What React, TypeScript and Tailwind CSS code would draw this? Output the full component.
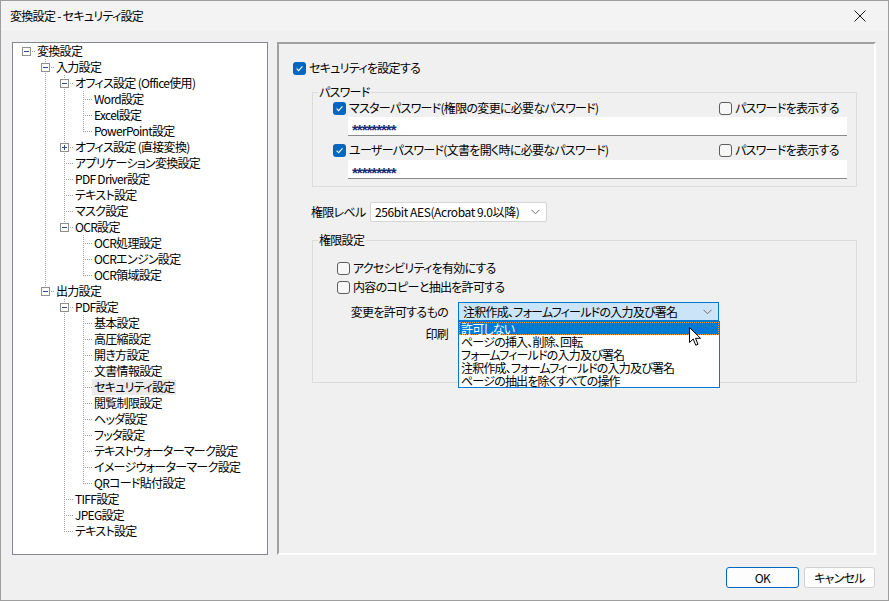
import React from 'react';

type TreeNode = { label: string; children?: TreeNode[]; collapsed?: boolean; selected?: boolean };

const leaf = (label: string, selected = false): TreeNode => ({ label, selected });

const TREE: TreeNode = {
  label: '変換設定',
  children: [
    {
      label: '入力設定',
      children: [
        { label: 'オフィス設定 (Office使用)', children: [leaf('Word設定'), leaf('Excel設定'), leaf('PowerPoint設定')] },
        { label: 'オフィス設定 (直接変換)', collapsed: true, children: [leaf('-')] },
        leaf('アプリケーション変換設定'),
        leaf('PDF Driver設定'),
        leaf('テキスト設定'),
        leaf('マスク設定'),
        { label: 'OCR設定', children: [leaf('OCR処理設定'), leaf('OCRエンジン設定'), leaf('OCR領域設定')] },
      ],
    },
    {
      label: '出力設定',
      children: [
        {
          label: 'PDF設定',
          children: [
            leaf('基本設定'),
            leaf('高圧縮設定'),
            leaf('開き方設定'),
            leaf('文書情報設定'),
            leaf('セキュリティ設定', true),
            leaf('閲覧制限設定'),
            leaf('ヘッダ設定'),
            leaf('フッタ設定'),
            leaf('テキストウォーターマーク設定'),
            leaf('イメージウォーターマーク設定'),
            leaf('QRコード貼付設定'),
          ],
        },
        leaf('TIFF設定'),
        leaf('JPEG設定'),
        leaf('テキスト設定'),
      ],
    },
  ],
};

type Row = { node: TreeNode; level: number; last: boolean; guides: boolean[] };

function flatten(node: TreeNode, level: number, last: boolean, guides: boolean[], out: Row[]) {
  out.push({ node, level, last, guides });
  if (node.children && !node.collapsed) {
    const kids = node.children;
    kids.forEach((c, i) => flatten(c, level + 1, i === kids.length - 1, [...guides, !last], out));
  }
}

const ROWS: Row[] = [];
flatten(TREE, 0, true, [], ROWS);

const cx = (l: number) => 13 + 19 * l;
const DOT = { stroke: '#a0a0a0', strokeDasharray: '1 1', shapeRendering: 'crispEdges' as const };

const TreeRow = ({ row }: { row: Row }) => {
  const { node, level: L, last, guides } = row;
  const c = cx(L);
  const hasBox = !!node.children;
  return (
    <div className="flex h-[16px] items-center">
      <svg width={c + 10} height={16} className="shrink-0">
        {guides.map((g, a) =>
          a >= 1 && a < L && g ? <line key={a} x1={cx(a) + 0.5} y1={0} x2={cx(a) + 0.5} y2={16} {...DOT} /> : null
        )}
        {L >= 1 && <line x1={c + 0.5} y1={0} x2={c + 0.5} y2={last ? 9 : 16} {...DOT} />}
        <line x1={c} y1={8.5} x2={c + 10} y2={8.5} {...DOT} />
        {hasBox && (
          <g shapeRendering="crispEdges">
            <rect x={c - 3.5} y={4.5} width={8} height={8} fill="#fff" stroke="#8e8f8f" />
            <line x1={c - 2} y1={8.5} x2={c + 3} y2={8.5} stroke="#2c4a86" />
            {node.collapsed && <line x1={c + 0.5} y1={6} x2={c + 0.5} y2={11} stroke="#2c4a86" />}
          </g>
        )}
      </svg>
      {node.selected ? (
        <span className="flex h-[16px] items-center whitespace-nowrap bg-[#ebebeb] px-[2px] -ml-[1px]">{node.label}</span>
      ) : (
        <span className="ml-[1px] whitespace-nowrap">{node.label}</span>
      )}
    </div>
  );
};

const Check = ({ checked }: { checked?: boolean }) =>
  checked ? (
    <span className="flex h-[13px] w-[13px] shrink-0 items-center justify-center rounded-[3px] bg-[#0067c0]">
      <svg width="9" height="9" viewBox="0 0 9 9">
        <path d="M1.6 4.7 L3.6 6.6 L7.5 2.4" stroke="#fff" strokeWidth="1.1" fill="none" />
      </svg>
    </span>
  ) : (
    <span className="h-[13px] w-[13px] shrink-0 rounded-[3px] border border-[#5d5d5d] bg-[#f7f7f7]" />
  );

const CheckLabel = ({ checked, children }: { checked?: boolean; children: React.ReactNode }) => (
  <div className="flex h-[16px] items-center gap-[3px] whitespace-nowrap">
    <Check checked={checked} />
    <span>{children}</span>
  </div>
);

const Chevron = () => (
  <svg width="9" height="6" viewBox="0 0 9 6" className="shrink-0">
    <path d="M0.5 0.8 L4.5 4.8 L8.5 0.8" stroke="#6b6b6b" strokeWidth="1" fill="none" />
  </svg>
);

const PasswordField = () => (
  <div className="ml-[15px] flex h-[19px] w-[499px] items-center border-b border-[#8a8a8a] bg-white pl-[4px] pt-[8px] font-['Liberation_Sans',sans-serif] text-[15px] font-bold tracking-[-1px] text-[#1b2b74]">
    *********
  </div>
);

const OPTIONS = [
  '許可しない',
  'ページの挿入、削除、回転',
  'フォームフィールドの入力及び署名',
  '注釈作成、フォームフィールドの入力及び署名',
  'ページの抽出を除くすべての操作',
];

export default function App() {
  return (
    <div className="relative flex h-[601px] w-[889px] flex-col overflow-hidden border border-[#9e9e9e] bg-[#f0f0f0] text-[12px] leading-[16px] tracking-[-0.7px] text-black font-['Noto_Sans_CJK_JP',sans-serif] [font-feature-settings:'palt']">
      {/* title bar */}
      <div className="flex h-[30px] shrink-0 items-center justify-between bg-[#f3f3f3] pl-[9px] pr-[22px]">
        <span>変換設定 - セキュリティ設定</span>
        <svg width="12" height="12" viewBox="0 0 12 12">
          <path d="M0.5 0.5 L11.5 11.5 M11.5 0.5 L0.5 11.5" stroke="#1a1a1a" strokeWidth="1" />
        </svg>
      </div>

      <div className="flex pl-[11px] pt-[11px]">
        {/* tree */}
        <div className="h-[513px] w-[256px] shrink-0 overflow-hidden border border-[#828790] bg-white">
          {ROWS.map((r, i) => (
            <TreeRow key={i} row={r} />
          ))}
        </div>

        {/* right panel */}
        <div className="ml-[9px] h-[513px] w-[599px] shrink-0 border-2 border-t-[#a0a0a0] border-l-[#a0a0a0] border-r-white border-b-white pl-[14px] pt-[16px]">
          <CheckLabel checked>セキュリティを設定する</CheckLabel>

          <fieldset className="ml-[19px] mt-[8px] w-[545px] border border-[#dcdcdc] p-0">
            <legend className="ml-[5px] px-[1px] leading-[16px]">パスワード</legend>
            <div className="pb-[7px] pl-[20px]">
              <div className="flex">
                <div className="w-[386px]">
                  <CheckLabel checked>マスターパスワード(権限の変更に必要なパスワード)</CheckLabel>
                </div>
                <CheckLabel>パスワードを表示する</CheckLabel>
              </div>
              <div className="mt-[1px]">
                <PasswordField />
              </div>
              <div className="mt-[6px] flex">
                <div className="w-[386px]">
                  <CheckLabel checked>ユーザーパスワード(文書を開く時に必要なパスワード)</CheckLabel>
                </div>
                <CheckLabel>パスワードを表示する</CheckLabel>
              </div>
              <div className="mt-[2px]">
                <PasswordField />
              </div>
            </div>
          </fieldset>

          <div className="ml-[18px] mt-[15px] flex h-[20px] items-center">
            <span className="w-[59px]">権限レベル</span>
            <div className="flex h-[20px] w-[177px] items-center justify-between rounded-[2px] border border-[#d5d5d5] bg-white pl-[4px] pr-[6px]">
              <span className="tracking-[-0.4px]">256bit AES(Acrobat 9.0以降)</span>
              <Chevron />
            </div>
          </div>

          <fieldset className="ml-[19px] mt-[10px] w-[545px] border border-[#dcdcdc] p-0">
            <legend className="ml-[5px] px-[1px] leading-[16px]">権限設定</legend>
            <div className="pb-[39px] pl-[24px] pt-[12px]">
              <CheckLabel>アクセシビリティを有効にする</CheckLabel>
              <div className="mt-[3px]">
                <CheckLabel>内容のコピーと抽出を許可する</CheckLabel>
              </div>
              <div className="mt-[7px] flex h-[19px] items-center">
                <span className="w-[111px] text-right">変更を許可するもの</span>
                <div className="relative ml-[10px] w-[261px]">
                  <div className="flex h-[19px] items-center justify-between border border-[#0078d4] bg-[#cce4f7] pl-[4px] pr-[6px]">
                    <span className="whitespace-nowrap tracking-[-0.75px]">注釈作成、フォームフィールドの入力及び署名</span>
                    <Chevron />
                  </div>
                  {/* open drop-down list */}
                  <div className="absolute left-0 top-full z-10 w-[262px] overflow-hidden border border-[#0078d4] bg-white tracking-[-0.8px]">
                    {OPTIONS.map((o, i) => (
                      <div
                        key={o}
                        className={
                          i === 0
                            ? 'flex h-[13px] items-center whitespace-nowrap border border-dotted border-[#f0a030] bg-[#0078d7] pl-[1px] leading-[13px] text-white'
                            : 'flex h-[13px] items-center whitespace-nowrap pl-[2px] leading-[13px]'
                        }
                      >
                        {o}
                      </div>
                    ))}
                  </div>
                </div>
              </div>
              <div className="mt-[3px] flex h-[19px] items-center">
                <span className="w-[111px] text-right">印刷</span>
                <div className="ml-[10px] h-[19px] w-[261px] border border-[#d5d5d5] bg-white" />
              </div>
            </div>
          </fieldset>
        </div>
      </div>

      {/* buttons */}
      <div className="flex justify-end gap-[5px] pr-[13px] pt-[12px]">
        <button className="flex h-[21px] w-[73px] items-center justify-center rounded-[3px] border border-[#0067c0] bg-[#fdfdfd]">
          OK
        </button>
        <button className="flex h-[21px] w-[71px] items-center justify-center rounded-[3px] border border-[#d0d0d0] bg-[#fdfdfd]">
          キャンセル
        </button>
      </div>

      {/* mouse pointer over list */}
      <svg width="13" height="20" viewBox="0 0 13 20" className="absolute left-[688px] top-[326px] z-20">
        <path d="M0.5 0.5 L0.5 15.5 L4.2 12 L6.8 18.2 L9 17.3 L6.5 11.3 L11.5 11.3 Z" fill="#fff" stroke="#000" strokeWidth="1" strokeLinejoin="round" />
      </svg>
    </div>
  );
}
